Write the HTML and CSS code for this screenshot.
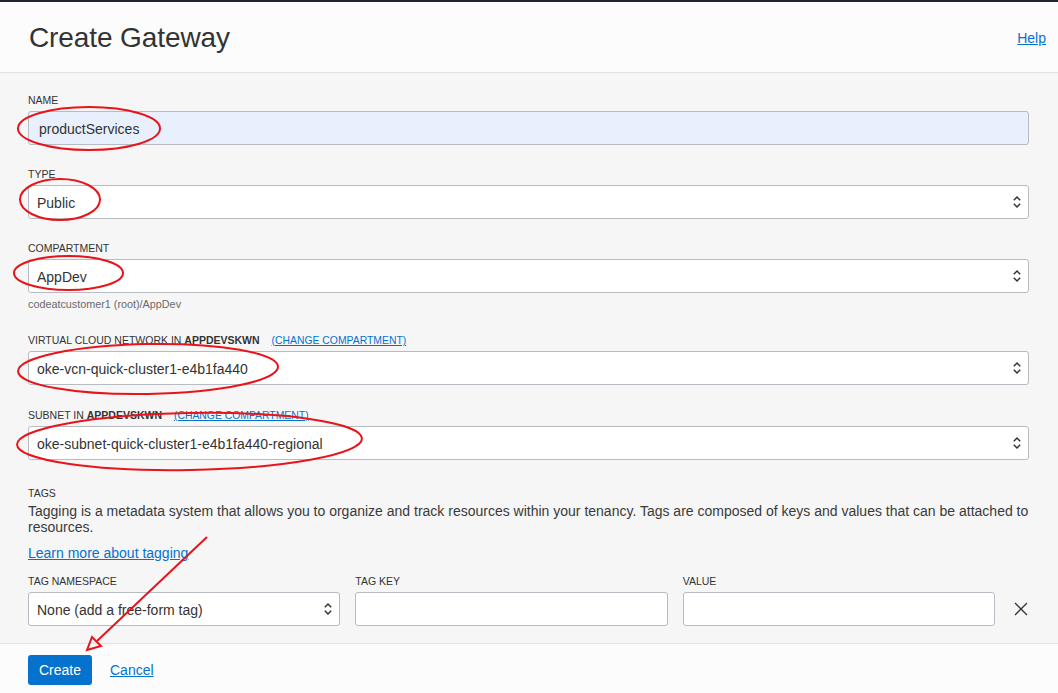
FILE: index.html
```html
<!DOCTYPE html>
<html lang="en">
<head>
<meta charset="utf-8">
<title>Create Gateway</title>
<link rel="stylesheet" href="styles.css">
</head>
<body>
<div class="page">
  <div class="topbar"></div>
  <header class="header">
    <h1 class="title">Create Gateway</h1>
    <a class="link help" href="#">Help</a>
  </header>
  <main class="content">
    <div class="field">
      <div class="label">Name</div>
      <div class="control control-filled text-input">productServices</div>
    </div>
    <div class="field">
      <div class="label">Type</div>
      <div class="control select">
        <span>Public</span>
        <svg class="chev" width="10" height="14" viewBox="0 0 10 14"><path d="M1.8 5.2 L5 2 L8.2 5.2 M1.8 8.8 L5 12 L8.2 8.8"/></svg>
      </div>
    </div>
    <div class="field">
      <div class="label">Compartment</div>
      <div class="control select">
        <span>AppDev</span>
        <svg class="chev" width="10" height="14" viewBox="0 0 10 14"><path d="M1.8 5.2 L5 2 L8.2 5.2 M1.8 8.8 L5 12 L8.2 8.8"/></svg>
      </div>
      <div class="helper">codeatcustomer1 (root)/AppDev</div>
    </div>
    <div class="field field-link">
      <div class="label">Virtual Cloud Network in <b>AppDevSKWN</b> <a class="link label-link" href="#">(Change Compartment)</a></div>
      <div class="control select">
        <span>oke-vcn-quick-cluster1-e4b1fa440</span>
        <svg class="chev" width="10" height="14" viewBox="0 0 10 14"><path d="M1.8 5.2 L5 2 L8.2 5.2 M1.8 8.8 L5 12 L8.2 8.8"/></svg>
      </div>
    </div>
    <div class="field">
      <div class="label">Subnet in <b>AppDevSKWN</b> <a class="link label-link" href="#">(Change Compartment)</a></div>
      <div class="control select">
        <span>oke-subnet-quick-cluster1-e4b1fa440-regional</span>
        <svg class="chev" width="10" height="14" viewBox="0 0 10 14"><path d="M1.8 5.2 L5 2 L8.2 5.2 M1.8 8.8 L5 12 L8.2 8.8"/></svg>
      </div>
    </div>
    <section class="tags">
      <div class="label">Tags</div>
      <p class="tags-desc">Tagging is a metadata system that allows you to organize and track resources within your tenancy. Tags are composed of keys and values that can be attached to resources.</p>
      <a class="link tags-link" href="#">Learn more about tagging</a>
      <div class="tag-grid">
        <div class="label">Tag Namespace</div>
        <div class="label">Tag Key</div>
        <div class="label">Value</div>
        <div></div>
        <div class="control select">
          <span>None (add a free-form tag)</span>
          <svg class="chev" width="10" height="14" viewBox="0 0 10 14"><path d="M1.8 5.2 L5 2 L8.2 5.2 M1.8 8.8 L5 12 L8.2 8.8"/></svg>
        </div>
        <div class="control"></div>
        <div class="control"></div>
        <div class="remove">
          <svg width="14" height="14" viewBox="0 0 14 14"><path d="M1 1 L13 13 M13 1 L1 13"/></svg>
        </div>
      </div>
    </section>
  </main>
  <footer class="footer">
    <button class="btn-primary" type="button">Create</button>
    <a class="link cancel" href="#">Cancel</a>
  </footer>
  <svg class="annotations" width="1058" height="693" viewBox="0 0 1058 693">
    <ellipse cx="89" cy="128.5" rx="71" ry="21.5"/>
    <ellipse cx="60" cy="199.5" rx="40" ry="20.5"/>
    <ellipse cx="68.5" cy="273" rx="54.5" ry="17"/>
    <ellipse cx="148" cy="369" rx="130" ry="25" transform="rotate(-1 148 369)"/>
    <ellipse cx="189.5" cy="441.5" rx="172.5" ry="28.5" transform="rotate(-1 189.5 441.5)"/>
    <line x1="207" y1="537" x2="97" y2="641"/>
    <polygon points="87,650 92,637 101,646"/>
  </svg>
</div>
</body>
</html>
```

FILE: styles.css
```css
* {
  box-sizing: border-box;
}

html, body {
  margin: 0;
  padding: 0;
}

body {
  font-family: "Liberation Sans", Arial, sans-serif;
  color: #333333;
  background: #f6f6f6;
}

.page {
  position: relative;
  width: 1058px;
  height: 693px;
  display: flex;
  flex-direction: column;
  overflow: hidden;
}

.topbar {
  height: 2px;
  background: #1e2430;
  flex: none;
}

.header {
  flex: none;
  height: 71px;
  background: #fcfcfc;
  border-bottom: 1px solid #e2e2e2;
  display: flex;
  align-items: center;
  justify-content: space-between;
  padding: 1px 12px 0 29px;
}

.title {
  margin: 0;
  font-size: 28px;
  font-weight: normal;
  color: #333333;
  letter-spacing: -0.1px;
}

.link {
  color: #0572ce;
  text-decoration: underline;
}

.help {
  font-size: 14px;
}

.content {
  flex: 1;
  padding: 19px 29px 0 28px;
}

.field {
  margin-bottom: 21px;
}

.field-link {
  margin-bottom: 22px;
}

.label {
  font-size: 10.5px;
  line-height: 15px;
  height: 15px;
  margin-bottom: 4px;
  padding-top: 1px;
  text-transform: uppercase;
  color: #333333;
  white-space: nowrap;
}

.label b {
  font-weight: bold;
}

.label-link {
  margin-left: 9px;
  font-size: 10.4px;
}

.control {
  height: 34px;
  background: #ffffff;
  border: 1px solid #b7bcc3;
  border-radius: 3px;
  display: flex;
  align-items: center;
  font-size: 14px;
  color: #333333;
  padding: 2px 8px 0;
}

.text-input {
  padding-left: 10px;
}

.control-filled {
  background: #e8f0fe;
}

.select {
  justify-content: space-between;
  padding-right: 6px;
}

.chev {
  flex: none;
  margin-top: -2px;
}

.chev path {
  fill: none;
  stroke: #333333;
  stroke-width: 1.5;
}

.helper {
  margin-top: 4px;
  font-size: 10.8px;
  line-height: 14px;
  color: #6a6a6a;
}

.tags {
  margin-top: 25px;
}

.tags .label:first-child {
  margin-bottom: 3px;
}

.tags-desc {
  margin: 0;
  font-size: 14px;
  line-height: 16px;
  color: #3a3a3a;
}

.tags-link {
  display: block;
  width: max-content;
  margin-top: 10px;
  font-size: 14px;
  line-height: 16px;
}

.tag-grid {
  margin-top: 12px;
  display: grid;
  grid-template-columns: 1fr 1fr 1fr 19px;
  column-gap: 15px;
}

.remove {
  display: flex;
  align-items: center;
  justify-content: center;
  padding-left: 2px;
}

.remove path {
  stroke: #333333;
  stroke-width: 1.3;
  fill: none;
}

.footer {
  flex: none;
  height: 50px;
  border-top: 1px solid #e2e2e2;
  background: #fcfcfc;
  display: flex;
  align-items: flex-start;
  padding: 11px 0 0 28px;
  gap: 18px;
}

.btn-primary {
  height: 30px;
  width: 64px;
  background: #0572ce;
  color: #ffffff;
  border: none;
  border-radius: 3px;
  font-family: "Liberation Sans", Arial, sans-serif;
  font-size: 14px;
  padding: 0;
}

.cancel {
  font-size: 14px;
  line-height: 30px;
}

.annotations {
  position: absolute;
  top: 0;
  left: 0;
  pointer-events: none;
}

.annotations ellipse,
.annotations line,
.annotations polygon {
  fill: none;
  stroke: #e8141b;
  stroke-width: 2;
}
```
